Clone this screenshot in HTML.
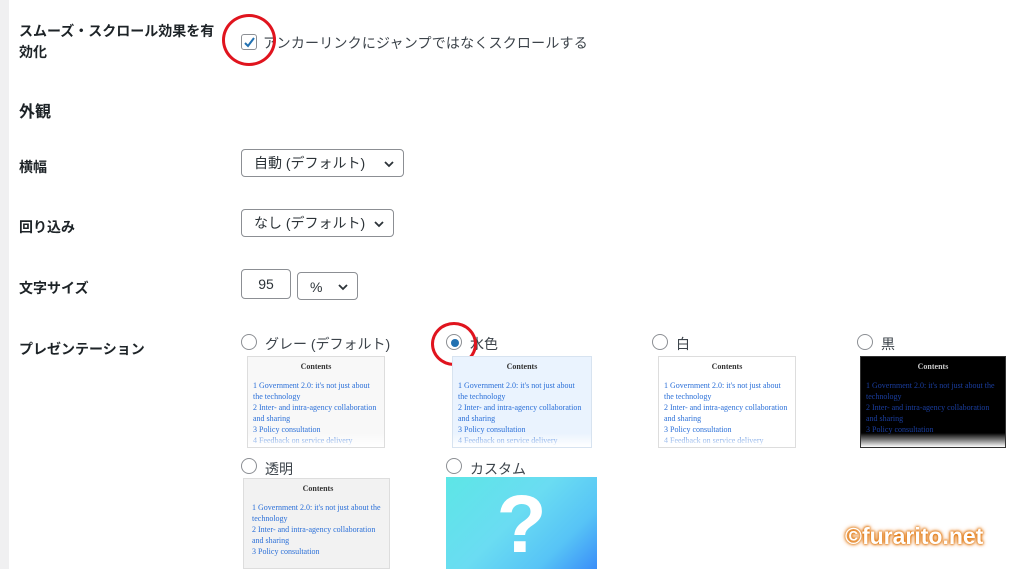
<!DOCTYPE html><html><head><meta charset="utf-8"><style>
body{margin:0;width:1024px;height:569px;overflow:hidden;background:#fff;font-family:"Liberation Sans","Noto Sans CJK JP",sans-serif;color:#3c434a;position:relative}
.a{position:absolute}
.lbl{font-weight:bold;font-size:14px;color:#1d2327}
.sel{position:absolute;border:1px solid #8c8f94;border-radius:4px;height:28px;box-sizing:border-box;font-size:14px;line-height:26px;padding-left:12px;color:#2c3338;background:#fff}
.sel svg{position:absolute;right:8px;top:9px}
.r{position:absolute;width:14px;height:14px;border:1px solid #8c8f94;border-radius:50%;background:#fff}
.rt{position:absolute;font-size:14px;color:#3c434a}
.th{position:absolute;overflow:hidden;font-family:"Liberation Serif",serif;font-size:8px;color:#2a6fd8;line-height:11px;box-sizing:border-box;border:1px solid #ddd;padding:4px 5px}
.th b{display:block;text-align:center;color:#333;margin-bottom:8px}
.fade:after{content:"";position:absolute;left:0;right:0;bottom:0;height:14px;background:linear-gradient(rgba(255,255,255,0),#fff)}
.ring{position:absolute;border:3px solid #e0141e;border-radius:50%}
</style></head><body>
<div class="a" style="left:0;top:0;width:9px;height:569px;background:#f0f0f1"></div>
<div class="a lbl" style="left:19px;top:21px;line-height:21px;width:210px">スムーズ・スクロール効果を有<br>効化</div>
<div class="a" style="left:241px;top:34px;width:14px;height:14px;border:1px solid #8c8f94;border-radius:3px"></div>
<svg class="a" style="left:242px;top:35px" width="16" height="16"><path d="M3 8l3 3 6-8" stroke="#2271b1" stroke-width="2" fill="none"/></svg>
<div class="a rt" style="left:263px;top:33px;font-size:14px;letter-spacing:0.2px">アンカーリンクにジャンプではなくスクロールする</div>
<div class="ring" style="left:222px;top:14px;width:48px;height:46px"></div>
<div class="a lbl" style="left:19px;top:98px;font-size:16px">外観</div>
<div class="a lbl" style="left:19px;top:157px">横幅</div>
<div class="sel" style="left:241px;top:149px;width:163px">自動 (デフォルト)<svg width="12" height="10"><path d="M2 3l4 4 4-4" stroke="#2c3338" stroke-width="1.8" fill="none"/></svg></div>
<div class="a lbl" style="left:19px;top:217px">回り込み</div>
<div class="sel" style="left:241px;top:209px;width:153px">なし (デフォルト)<svg width="12" height="10"><path d="M2 3l4 4 4-4" stroke="#2c3338" stroke-width="1.8" fill="none"/></svg></div>
<div class="a lbl" style="left:19px;top:278px">文字サイズ</div>
<div class="sel" style="left:241px;top:269px;width:50px;height:30px;padding:0;text-align:center;line-height:28px">95</div>
<div class="sel" style="left:297px;top:272px;width:61px;line-height:28px">%<svg width="12" height="10"><path d="M2 3l4 4 4-4" stroke="#2c3338" stroke-width="1.8" fill="none"/></svg></div>
<div class="a lbl" style="left:19px;top:339px">プレゼンテーション</div>

<div class="r" style="left:241px;top:334px"></div><div class="rt" style="left:265px;top:334px">グレー (デフォルト)</div>
<div class="r" style="left:446px;top:334px"></div><div class="a" style="left:451px;top:339px;width:8px;height:8px;border-radius:50%;background:#2271b1"></div><div class="rt" style="left:470px;top:334px">水色</div>
<div class="ring" style="left:431px;top:322px;width:40px;height:38px"></div>
<div class="r" style="left:652px;top:334px"></div><div class="rt" style="left:676px;top:334px">白</div>
<div class="r" style="left:857px;top:334px"></div><div class="rt" style="left:881px;top:334px">黒</div>

<div class="th fade" style="left:247px;top:356px;width:138px;height:92px;background:#f8f8f8"><b>Contents</b>1 Government 2.0: it's not just about the technology<br>2 Inter- and intra-agency collaboration and sharing<br>3 Policy consultation<br>4 Feedback on service delivery</div>
<div class="th fade" style="left:452px;top:356px;width:140px;height:92px;background:#eaf3fe;border-color:#d7e3f0"><b>Contents</b>1 Government 2.0: it's not just about the technology<br>2 Inter- and intra-agency collaboration and sharing<br>3 Policy consultation<br>4 Feedback on service delivery</div>
<div class="th fade" style="left:658px;top:356px;width:138px;height:92px;background:#fff"><b>Contents</b>1 Government 2.0: it's not just about the technology<br>2 Inter- and intra-agency collaboration and sharing<br>3 Policy consultation<br>4 Feedback on service delivery</div>
<div class="th fade" style="left:860px;top:356px;width:146px;height:92px;background:#000;color:#1a3ea0;border-color:#333"><b style="color:#ccc">Contents</b>1 Government 2.0: it's not just about the technology<br>2 Inter- and intra-agency collaboration and sharing<br>3 Policy consultation</div>

<div class="r" style="left:241px;top:458px"></div><div class="rt" style="left:265px;top:459px">透明</div>
<div class="r" style="left:446px;top:458px"></div><div class="rt" style="left:470px;top:459px">カスタム</div>
<div class="th" style="left:243px;top:478px;width:147px;height:91px;background:#f2f2f2;padding-left:8px"><b>Contents</b>1 Government 2.0: it's not just about the technology<br>2 Inter- and intra-agency collaboration and sharing<br>3 Policy consultation</div>
<div class="a" style="left:446px;top:477px;width:151px;height:92px;background:linear-gradient(135deg,#5de6e6 0%,#6adcf2 45%,#57c4f6 75%,#3a8ef8 100%)"><div style="position:absolute;left:0;right:0;top:2px;text-align:center;font-size:82px;font-weight:bold;color:#fff;line-height:92px">?</div></div>
<div class="a" style="left:845px;top:523px;font-size:23px;font-weight:bold;color:#fff;text-shadow:0 0 3px #e07000,0 0 5px #e07000,0 0 2px #e07000">©furarito.net</div>
</body></html>
